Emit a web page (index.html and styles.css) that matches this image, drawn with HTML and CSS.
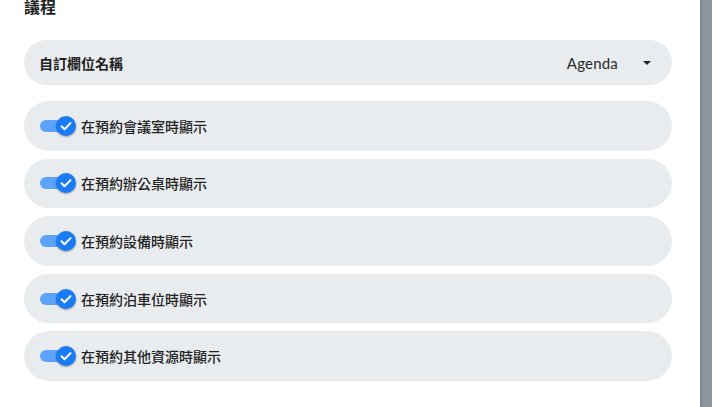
FILE: index.html
```html
<!DOCTYPE html>
<html lang="zh-Hant">
<head>
<meta charset="utf-8">
<link rel="stylesheet" href="styles.css">
</head>
<body>
<div class="page">
  <main class="panel">
    <h2 class="title">議程</h2>
    <div class="row select-row">
      <span class="label">自訂欄位名稱</span>
      <span class="select"><span class="value">Agenda</span><span class="caret"></span></span>
    </div>
    <div class="row toggle-row">
      <span class="toggle"><span class="track"></span><span class="thumb"><svg viewBox="0 0 20 20" width="20" height="20"><path d="M5.5 10.3l3 3 6-6.2" fill="none" stroke="#fff" stroke-width="2" stroke-linecap="round" stroke-linejoin="round"/></svg></span></span>
      <span class="text">在預約會議室時顯示</span>
    </div>
    <div class="row toggle-row">
      <span class="toggle"><span class="track"></span><span class="thumb"><svg viewBox="0 0 20 20" width="20" height="20"><path d="M5.5 10.3l3 3 6-6.2" fill="none" stroke="#fff" stroke-width="2" stroke-linecap="round" stroke-linejoin="round"/></svg></span></span>
      <span class="text">在預約辦公桌時顯示</span>
    </div>
    <div class="row toggle-row">
      <span class="toggle"><span class="track"></span><span class="thumb"><svg viewBox="0 0 20 20" width="20" height="20"><path d="M5.5 10.3l3 3 6-6.2" fill="none" stroke="#fff" stroke-width="2" stroke-linecap="round" stroke-linejoin="round"/></svg></span></span>
      <span class="text">在預約設備時顯示</span>
    </div>
    <div class="row toggle-row">
      <span class="toggle"><span class="track"></span><span class="thumb"><svg viewBox="0 0 20 20" width="20" height="20"><path d="M5.5 10.3l3 3 6-6.2" fill="none" stroke="#fff" stroke-width="2" stroke-linecap="round" stroke-linejoin="round"/></svg></span></span>
      <span class="text">在預約泊車位時顯示</span>
    </div>
    <div class="row toggle-row">
      <span class="toggle"><span class="track"></span><span class="thumb"><svg viewBox="0 0 20 20" width="20" height="20"><path d="M5.5 10.3l3 3 6-6.2" fill="none" stroke="#fff" stroke-width="2" stroke-linecap="round" stroke-linejoin="round"/></svg></span></span>
      <span class="text">在預約其他資源時顯示</span>
    </div>
  </main>
  <div class="overlay"></div>
</div>
</body>
</html>
```
FILE: styles.css
```css
html, body {
  margin: 0;
  padding: 0;
  background: #ffffff;
}
body {
  font-family: "Lato", "Noto Sans", "Noto Sans CJK TC", sans-serif;
  color: #222;
  overflow: hidden;
}
.page {
  display: flex;
  width: 712px;
  height: 407px;
}
.panel {
  flex: 1;
  padding: 0 28px 0 24px;
  display: flex;
  flex-direction: column;
  gap: 8px;
}
.overlay {
  width: 12px;
  background: linear-gradient(to right, #7f858e 0, #8f959d 3px, #90969e 100%);
}
.title {
  margin: -4px 0 15px;
  font-family: "Noto Sans CJK TC", sans-serif;
  font-size: 16px;
  line-height: 21px;
  font-weight: 700;
  color: #222;
}
.row {
  background: #e9ecef;
  border-radius: 25px;
  display: flex;
  align-items: center;
}
.select-row {
  height: 45px;
  padding: 0 21px 0 15px;
  justify-content: space-between;
  margin-bottom: 8px;
}
.label {
  font-family: "Noto Sans CJK TC", sans-serif;
  font-size: 14px;
  font-weight: 700;
  color: #222;
}
.select {
  display: flex;
  align-items: center;
  gap: 25px;
}
.value {
  font-family: "Lato", sans-serif;
  font-size: 15px;
  color: #2a2a2a;
  letter-spacing: 0.2px;
}
.caret {
  width: 0;
  height: 0;
  border-left: 4px solid transparent;
  border-right: 4px solid transparent;
  border-top: 4px solid #222;
}
.toggle-row {
  height: 49.6px;
  padding: 0 16px;
}
.toggle {
  position: relative;
  width: 37px;
  height: 20px;
  flex: none;
  margin-right: 4px;
}
.track {
  position: absolute;
  left: 0;
  top: 4px;
  width: 28px;
  height: 12px;
  border-radius: 6px;
  background: #5ba3fb;
}
.thumb {
  position: absolute;
  left: 16px;
  top: 0;
  width: 20px;
  height: 20px;
  border-radius: 50%;
  background: #1a7cf5;
  box-shadow: 0 1px 2px rgba(0,0,0,0.35);
  display: flex;
}
.text {
  font-family: "Noto Sans CJK TC", sans-serif;
  font-size: 14px;
  font-weight: 500;
  color: #222;
}
```
